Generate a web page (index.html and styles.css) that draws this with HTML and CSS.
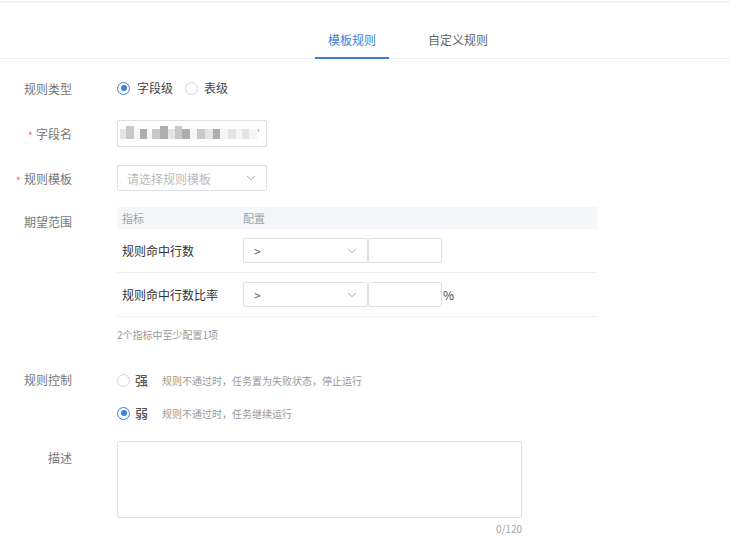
FILE: index.html
```html
<!DOCTYPE html>
<html lang="zh-CN">
<head>
<meta charset="utf-8">
<title>规则配置</title>
<link rel="stylesheet" href="styles.css">
</head>
<body>
<div class="page">
  <div class="tabs">
    <div class="tab active">模板规则</div>
    <div class="tab">自定义规则</div>
  </div>

  <div class="form">
    <div class="row row-type">
      <div class="label">规则类型</div>
      <div class="ctrl radios">
        <span class="radio checked"><span class="dot"></span>字段级</span>
        <span class="radio"><span class="dot"></span>表级</span>
      </div>
    </div>

    <div class="row row-field">
      <div class="label"><span class="req">*</span>字段名</div>
      <div class="ctrl">
        <div class="input field-input">
          <span class="blur">
            <i class="b w6 l"></i><i class="b w8 m t"></i><i class="b w6 x"></i><i class="b w7 d"></i><i class="b w5 x"></i><i class="b w8 m"></i><i class="b w8 d t"></i><i class="b w7 l"></i><i class="b w7 m t"></i><i class="b w8 d"></i><i class="b w7 x"></i><i class="b w8 m"></i><i class="b w8 l"></i><i class="b w7 d"></i><i class="b w8 x"></i><i class="b w8 l"></i><i class="b w6 x"></i><i class="b w7 l"></i><i class="b w8 x"></i>
          </span>
          <span class="tick">'</span>
        </div>
      </div>
    </div>

    <div class="row row-tpl">
      <div class="label"><span class="req">*</span>规则模板</div>
      <div class="ctrl">
        <div class="select tpl-select">
          <span class="placeholder">请选择规则模板</span>
          <svg class="chev" width="10" height="6" viewBox="0 0 10 6"><path d="M1 0.8 L5 4.8 L9 0.8" fill="none" stroke="#a8a8a8" stroke-width="1"/></svg>
        </div>
      </div>
    </div>

    <div class="row row-range">
      <div class="label">期望范围</div>
      <div class="ctrl">
        <div class="metrics">
          <div class="m-head">
            <div class="m-c1">指标</div>
            <div class="m-c2">配置</div>
          </div>
          <div class="m-row">
            <div class="m-c1 m-name">规则命中行数</div>
            <div class="m-c2 m-cfg">
              <div class="select op-select">
                <span class="op">&gt;</span>
                <svg class="chev" width="10" height="6" viewBox="0 0 10 6"><path d="M1 0.8 L5 4.8 L9 0.8" fill="none" stroke="#a8a8a8" stroke-width="1"/></svg>
              </div>
              <div class="input num-input"></div>
            </div>
          </div>
          <div class="m-row">
            <div class="m-c1 m-name">规则命中行数比率</div>
            <div class="m-c2 m-cfg">
              <div class="select op-select">
                <span class="op">&gt;</span>
                <svg class="chev" width="10" height="6" viewBox="0 0 10 6"><path d="M1 0.8 L5 4.8 L9 0.8" fill="none" stroke="#a8a8a8" stroke-width="1"/></svg>
              </div>
              <div class="input num-input"></div>
              <span class="pct">%</span>
            </div>
          </div>
        </div>
        <div class="hint">2个指标中至少配置1项</div>
      </div>
    </div>

    <div class="row row-ctrl">
      <div class="label">规则控制</div>
      <div class="ctrl options">
        <div class="option">
          <span class="radio"><span class="dot"></span><span class="opt-name">强</span></span>
          <span class="opt-desc">规则不通过时，任务置为失败状态，停止运行</span>
        </div>
        <div class="option">
          <span class="radio checked"><span class="dot"></span><span class="opt-name">弱</span></span>
          <span class="opt-desc">规则不通过时，任务继续运行</span>
        </div>
      </div>
    </div>

    <div class="row row-desc">
      <div class="label">描述</div>
      <div class="ctrl">
        <textarea class="textarea"></textarea>
        <div class="counter">0/120</div>
      </div>
    </div>
  </div>
</div>
</body>
</html>
```

FILE: styles.css
```css
* { box-sizing: border-box; }

html, body {
  margin: 0;
  padding: 0;
  background: #fff;
}

body {
  font-family: "Noto Sans CJK SC", "Noto Sans", "Liberation Sans", sans-serif;
  font-size: 12px;
  color: #333;
}

.page {
  padding-top: 1px;
  width: 730px;
  height: 543px;
  overflow: hidden;
}

/* tabs */
.tabs {
  display: flex;
  gap: 26px;
  padding-left: 315px;
  border-top: 2px solid #f3f3f3;
  border-bottom: 1px solid #ececec;
}

.tab {
  padding: 27px 13px 7px;
  line-height: 20px;
  font-size: 12px;
  color: #666;
  border-bottom: 2px solid transparent;
  margin-bottom: -1px;
}

.tab.active {
  color: #3d7fdc;
  border-bottom-color: #3d7fdc;
}

/* form layout */
.form {
  display: flex;
  flex-direction: column;
}

.row {
  display: grid;
  grid-template-columns: 72px 1fr;
  column-gap: 45px;
  align-items: center;
}

.label {
  text-align: right;
  color: #777;
  font-size: 12px;
  white-space: nowrap;
}

.req {
  color: #f27272;
  margin-right: 3px;
  font-size: 11px;
  position: relative;
  top: 1px;
}

.row-type { margin-top: 15px; height: 28px; }
.row-field { margin-top: 18px; height: 27px; }
.row-tpl { margin-top: 18px; height: 26px; }
.row-range { margin-top: 16px; align-items: start; }
.row-range .label { line-height: 30px; }
.row-ctrl { margin-top: 28px; align-items: start; }
.row-ctrl .label { line-height: 20px; }
.row-desc { margin-top: 18px; align-items: start; }
.row-desc .label { line-height: 34px; }

/* radios */
.radios {
  display: flex;
  align-items: center;
  gap: 12px;
}

.radio {
  display: inline-flex;
  align-items: center;
  gap: 7px;
  color: #444;
  line-height: 20px;
}

.radios .radio + .radio { gap: 6px; }

.dot {
  width: 13px;
  height: 13px;
  border: 1px solid #d6d6d6;
  border-radius: 50%;
  display: inline-flex;
  align-items: center;
  justify-content: center;
  background: #fff;
  flex: none;
}

.radio.checked .dot {
  border-color: #3d7fdc;
}

.radio.checked .dot::after {
  content: "";
  width: 6px;
  height: 6px;
  border-radius: 50%;
  background: #3d7fdc;
}

/* inputs */
.input, .select {
  border: 1px solid #dfe1e6;
  border-radius: 2px;
  background: #fff;
}

.field-input {
  width: 150px;
  height: 27px;
  display: flex;
  align-items: center;
  padding: 0 4px 0 2px;
  justify-content: space-between;
}

.blur {
  display: flex;
  align-items: center;
  height: 16px;
}

.b {
  display: inline-block;
  height: 10px;
  margin-right: 0;
}

.b.t { height: 13px; margin-top: -3px; }
.b.w4 { width: 4px; }
.b.w5 { width: 5px; }
.b.w6 { width: 6px; }
.b.w7 { width: 7px; }
.b.w8 { width: 8px; }
.b.x { background: #f6f6f6; }
.b.l { background: #e4e4e4; }
.b.m { background: #c8c8c8; }
.b.d { background: #adadad; }

.tick {
  color: #999;
  font-size: 10px;
  line-height: 10px;
  margin-right: 3px;
}

.select {
  display: flex;
  align-items: center;
  justify-content: space-between;
}

.tpl-select {
  width: 150px;
  height: 26px;
  padding: 0 10px 0 9px;
}

.placeholder {
  color: #bbb;
  font-size: 12px;
}

.chev { display: block; }

/* metrics table */
.metrics {
  width: 480px;
}

.m-head {
  display: flex;
  align-items: center;
  height: 22px;
  background: #f4f6f9;
  color: #a3a3a3;
  font-size: 11px;
}

.m-c1 {
  width: 126px;
  padding-left: 5px;
  flex: none;
}

.m-c2 {
  flex: 1;
}

.m-row {
  display: flex;
  align-items: center;
  height: 44px;
  border-bottom: 1px solid #eeeeee;
}

.m-name {
  color: #333;
  font-size: 12px;
}

.m-cfg {
  display: flex;
  align-items: center;
}

.op-select {
  width: 125px;
  height: 25px;
  padding: 0 10px 0 10px;
}

.op {
  color: #666;
  font-size: 12px;
}

.num-input {
  width: 74px;
  height: 25px;
}

.pct {
  margin-left: 1px;
  color: #444;
  font-size: 12px;
}

.hint {
  margin-top: 11px;
  line-height: 14px;
  font-size: 10px;
  color: #999;
}

/* rule control */
.options {
  display: flex;
  flex-direction: column;
  gap: 13px;
}

.option {
  display: flex;
  align-items: center;
  height: 20px;
}

.option .radio { gap: 5px; }

.opt-name {
  font-size: 13px;
  color: #555;
  font-weight: 500;
}

.opt-desc {
  margin-left: 14px;
  font-size: 10px;
  color: #999;
}

/* description */
.textarea {
  display: block;
  width: 405px;
  height: 77px;
  border: 1px solid #dfe1e6;
  border-radius: 2px;
  resize: none;
  margin: 0;
  padding: 6px 8px;
  font-family: inherit;
  outline: none;
}

.counter {
  width: 405px;
  text-align: right;
  margin-top: 4px;
  line-height: 14px;
  font-size: 10px;
  color: #a3a3a3;
}
```
